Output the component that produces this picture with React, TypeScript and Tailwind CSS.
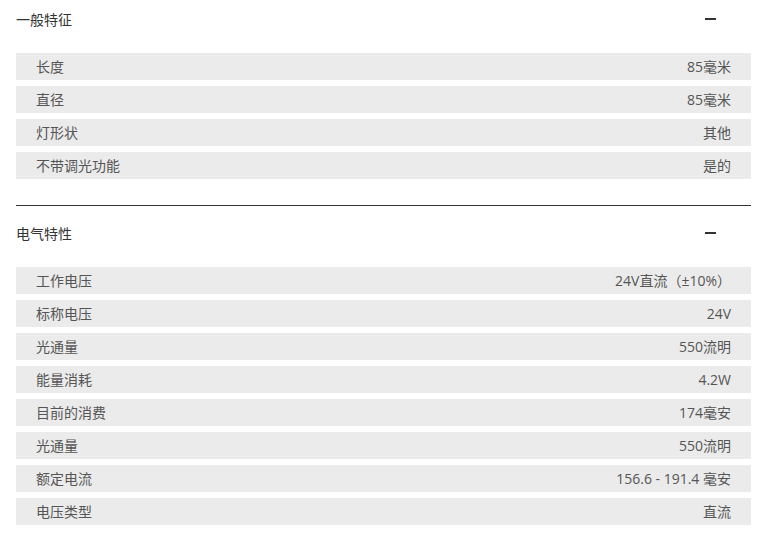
import React from "react";

type Spec = { label: string; value: string };

const sections: { title: string; rows: Spec[] }[] = [
  {
    title: "一般特征",
    rows: [
      { label: "长度", value: "85毫米" },
      { label: "直径", value: "85毫米" },
      { label: "灯形状", value: "其他" },
      { label: "不带调光功能", value: "是的" },
    ],
  },
  {
    title: "电气特性",
    rows: [
      { label: "工作电压", value: "24V直流（±10%）" },
      { label: "标称电压", value: "24V" },
      { label: "光通量", value: "550流明" },
      { label: "能量消耗", value: "4.2W" },
      { label: "目前的消费", value: "174毫安" },
      { label: "光通量", value: "550流明" },
      { label: "额定电流", value: "156.6 - 191.4 毫安" },
      { label: "电压类型", value: "直流" },
    ],
  },
];

const Section = ({ title, rows, first, last }: { title: string; rows: Spec[]; first?: boolean; last?: boolean }) => (
  <div className={`${first ? "" : "pt-[8px]"} ${last ? "pb-4" : "pb-[26px] border-b border-[#333]"}`}>
    <div className="h-[38px] flex items-center justify-between">
      <h3 className="text-[14px] text-[#333]">{title}</h3>
      <span className="w-[11px] h-[2px] bg-[#333] mr-[35px]" />
    </div>
    <div className="mt-[15px] flex flex-col gap-[6px]">
      {rows.map((row, i) => (
        <div
          key={i}
          className="h-[27px] px-5 bg-[#ebebeb] flex items-center justify-between text-[14px] text-[#555]"
        >
          <span>{row.label}</span>
          <span>{row.value}</span>
        </div>
      ))}
    </div>
  </div>
);

export default function App() {
  return (
    <div
      className="w-[765px] bg-white pl-4 pr-[14px]"
      style={{ fontFamily: '"Open Sans", "Noto Sans CJK SC", sans-serif' }}
    >
      {sections.map((s, i) => (
        <Section
          key={s.title}
          title={s.title}
          rows={s.rows}
          first={i === 0}
          last={i === sections.length - 1}
        />
      ))}
    </div>
  );
}
